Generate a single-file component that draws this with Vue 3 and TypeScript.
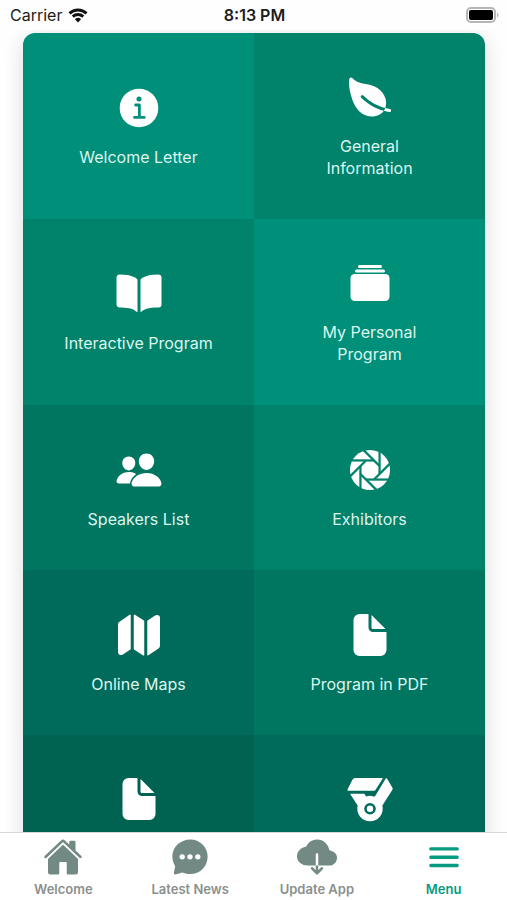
<script setup lang="ts">
import { ref } from 'vue'

interface Tile {
  icon: string
  label?: string
  name?: string
  tone: string
}

interface Tab {
  icon: string
  label: string
}

const tiles: Tile[] = [
  { icon: 'info', label: 'Welcome Letter', tone: 'tone-1' },
  { icon: 'leaf', label: 'General\nInformation', tone: 'tone-2' },
  { icon: 'book', label: 'Interactive Program', tone: 'tone-2' },
  { icon: 'albums', label: 'My Personal\nProgram', tone: 'tone-1' },
  { icon: 'people', label: 'Speakers List', tone: 'tone-3' },
  { icon: 'aperture', label: 'Exhibitors', tone: 'tone-2' },
  { icon: 'map', label: 'Online Maps', tone: 'tone-4' },
  { icon: 'document', label: 'Program in PDF', tone: 'tone-3' },
  { icon: 'document', name: 'Document', tone: 'tone-5' },
  { icon: 'medal', name: 'Awards', tone: 'tone-4' },
]

const tabs: Tab[] = [
  { icon: 'home', label: 'Welcome' },
  { icon: 'chat', label: 'Latest News' },
  { icon: 'cloud', label: 'Update App' },
  { icon: 'menu', label: 'Menu' },
]

const activeTab = ref('menu')

const glyphs: Record<string, string[]> = {
  leaf: [
    'M161.35 242a16 16 0 0122.62-.68c73.63 69.36 147.51 111.56 234.45 133.07 11.73-32 12.77-67.22 2.64-101.58-13.44-45.59-44.74-85.31-90.49-114.86-40.84-26.38-81.66-33.25-121.15-39.89-49.82-8.38-96.88-16.3-141.79-63.85-5-5.26-11.81-7.37-18.32-5.66-7.44 2-12.43 7.88-14.82 17.6-5.6 22.75-2 86.51 13.75 153.82 25.29 108.14 65.65 162.86 95.06 189.73 38 34.69 87.62 53.9 136.93 53.9a186 186 0 0027.77-2.04c41.71-6.32 76.43-27.27 96-57.75-89.49-23.28-165.94-67.55-242-139.16a16 16 0 01-.65-22.65z',
    'M467.43 384.19c-16.83-2.59-33.13-5.84-49-9.77a157.71 157.71 0 01-12.13 25.68c-.73 1.25-1.5 2.49-2.29 3.71a584.21 584.21 0 0058.56 12 16 16 0 104.87-31.62z',
  ],
  book: [
    'M202.24 74C166.11 56.75 115.61 48.3 48 48a31.36 31.36 0 00-17.92 5.33A32 32 0 0016 79.9V366c0 19.34 13.76 33.93 32 33.93 71.07 0 142.36 6.64 185.06 47a4.11 4.11 0 006.94-3V106.82a15.89 15.89 0 00-5.46-12A143 143 0 00202.24 74z',
    'M481.92 53.3A31.33 31.33 0 00464 48c-67.61.3-118.11 8.71-154.24 26a143.31 143.31 0 00-32.31 20.78 15.93 15.93 0 00-5.45 12v337.13a3.93 3.93 0 006.68 2.81c25.67-25.5 70.72-46.82 185.36-46.81a32 32 0 0032-32v-288a32 32 0 00-14.08-26.81z',
  ],
  albums: [
    'M368 96H144a16 16 0 010-32h224a16 16 0 010 32z',
    'M400 144H112a16 16 0 010-32h288a16 16 0 010 32z',
    'M419.13 448H92.87A44.92 44.92 0 0148 403.13V204.87A44.92 44.92 0 0192.87 160h326.26A44.92 44.92 0 01464 204.87v198.26A44.92 44.92 0 01419.13 448z',
  ],
  people: [
    'M336 256c-20.56 0-40.44-9.18-56-25.84-15.13-16.25-24.37-37.92-26-61-1.74-24.62 5.77-47.26 21.14-63.76S312 80 336 80c23.83 0 45.38 9.06 60.7 25.52 15.47 16.62 23 39.22 21.26 63.63-1.67 23.11-10.9 44.77-26 61C376.44 246.82 356.57 256 336 256z',
    'M467.83 432H204.18a27.71 27.71 0 01-22-10.67 30.22 30.22 0 01-5.26-25.79c8.42-33.81 29.28-61.85 60.32-81.08C264.79 297.4 299.86 288 336 288c36.85 0 71 9 98.71 26.05 31.11 19.13 52 47.33 60.38 81.55a30.27 30.27 0 01-5.32 25.78A27.68 27.68 0 01467.83 432z',
    'M147 260c-35.19 0-66.13-32.72-69-72.93-1.42-20.6 5-39.65 18-53.62 12.86-13.83 31-21.45 51-21.45s38 7.66 50.93 21.57c13.1 14.08 19.5 33.09 18 53.52C213.06 227.3 182.13 260 147 260z',
    'M212.66 291.45c-17.59-8.6-40.42-12.9-65.65-12.9-29.46 0-58.07 7.68-80.57 21.62C40.93 316 23.77 339.05 16.84 366.88a27.39 27.39 0 004.79 23.36A25.32 25.32 0 0041.72 400h111a8 8 0 007.87-6.57c.11-.63.25-1.26.41-1.88 8.48-34.06 28.35-62.84 57.71-83.82a8 8 0 00-.63-13.39c-1.57-.92-3.37-1.89-5.42-2.89z',
  ],
  map: [
    'M48.17 113.34A32 32 0 0032 141.24V438a32 32 0 0047 28.37c.43-.23.85-.47 1.26-.74l84.14-55.05a8 8 0 003.63-6.72V46.45a8 8 0 00-12.51-6.63z',
    'M212.36 39.31A8 8 0 00200 46v357.56a8 8 0 003.63 6.7l96.23 63.32A8 8 0 00312 467V108.67a8 8 0 00-3.64-6.73z',
    'M464.53 46.47a31.64 31.64 0 00-31.5-.88 12.07 12.07 0 00-1.25.74l-84.15 55a8 8 0 00-3.63 6.72v357.46a8 8 0 0012.52 6.63l107.07-73.46a32 32 0 0016.41-28V74.31a31.9 31.9 0 00-15.47-27.84z',
  ],
  document: [
    'M428 224H288a48 48 0 01-48-48V36a4 4 0 00-4-4h-92a64 64 0 00-64 64v320a64 64 0 0064 64h224a64 64 0 0064-64V228a4 4 0 00-4-4z',
    'M419.22 188.59L275.41 44.78a2 2 0 00-3.41 1.41V176a16 16 0 0016 16h129.81a2 2 0 001.41-3.41z',
  ],
  medal: [
    'M97 32H386a6 6 0 015 9L314 160a16 16 0 01-13 8H28a12 12 0 01-11-17L70 48a32 32 0 0127-16z',
    'M424 38a8 8 0 0113 0L494 132a24 24 0 011 25L388 325a136 136 0 11-264 0L43 200h152l19 29a136 136 0 0178-1h16z',
  ],
  home: [
    'M261.56 101.28a8 8 0 00-11.06 0L66.4 277.15a8 8 0 00-2.47 5.79L63.9 448a32 32 0 0032 32H192a16 16 0 0016-16V328a8 8 0 018-8h80a8 8 0 018 8v136a16 16 0 0016 16h96.06a32 32 0 0032-32V282.94a8 8 0 00-2.47-5.79z',
    'M490.91 244.15l-74.8-71.56V64a16 16 0 00-16-16h-48a16 16 0 00-16 16v32l-57.92-55.38C272.77 35.14 264.71 32 256 32c-8.68 0-16.72 3.14-22.14 8.63l-212.7 203.5c-6.22 6-7 15.87-1.34 22.37A16 16 0 0043 267.56L250.5 69.28a8 8 0 0111.06 0l207.52 198.28a16 16 0 0022.59-.44c6.14-6.36 5.63-16.86-.76-22.97z',
  ],
  chat: [
    'M260 32C144 32 30 118 30 247c0 41 11 82 31 118 3 6 4 12 3 18L49 462c-2 12 8 20 19 17l81-23c6-2 12-2 18 1 29 12 61 18 93 18 124 0 222-98 222-225C482 130 384 32 260 32z',
  ],
  cloud: [
    'M473.66 194c-14-10.38-31.2-18-49.36-22.11a16.11 16.11 0 01-12.19-12.22c-7.8-34.75-24.59-64.55-49.27-87.13C334.15 46.25 296.21 31.79 256 31.79c-35.35 0-68 11.08-94.37 32.05a150.07 150.07 0 00-42.06 53 16 16 0 01-11.31 8.87c-26.75 5.4-50.9 16.87-69.34 33.12C13.46 181.33 0 211.24 0 245.39c0 34.52 14.49 66 40.79 86.76C65.91 353.79 99.73 364 136 364h104V224a16 16 0 0132 0v140h140c66 0 100-50 100-100 0-32-14-54-38.34-70z',
    'M240 425.42l-36.7-36.64a16 16 0 00-22.6 22.65l64 63.89a16 16 0 0022.6 0l64-63.89a16 16 0 00-22.6-22.65L272 425.42V364h-32z',
  ],
}

const bladeAngles: number[] = [0, 45, 90, 135, 180, 225, 270, 315]
</script>

<template>
  <div class="screen">
    <header class="status">
      <div class="carrier">
        <span>Carrier</span>
        <svg class="wifi" viewBox="0 0 20 15" aria-hidden="true">
          <path d="M1.5 5.3a12.3 12.3 0 0117 0M4.8 8.6a7.6 7.6 0 0110.4 0" />
          <path class="wifi-dot" d="M10 14.5l-3.1-3.2a4.5 4.5 0 016.2 0z" />
        </svg>
      </div>
      <time class="clock">8:13 PM</time>
      <svg class="battery" viewBox="0 0 33 16" aria-hidden="true">
        <rect class="shell" x="1" y="1" width="28" height="14" rx="4" />
        <rect x="3" y="3" width="24" height="10" rx="2" />
        <path class="cap" d="M31 5.5c2 1 2 4 0 5z" />
      </svg>
    </header>

    <main class="content">
      <div class="grid">
        <a
          v-for="(tile, i) in tiles"
          :key="i"
          href="#"
          class="tile"
          :class="[tile.tone, { bare: !tile.label }]"
          :aria-label="tile.name"
          @click.prevent
        >
          <svg class="tile-icon" viewBox="0 0 512 512" aria-hidden="true">
            <template v-if="tile.icon === 'info'">
              <circle cx="256" cy="256" r="206" />
              <circle class="hole" cx="256" cy="160" r="27" />
              <path class="cut info-stroke" d="M220 224h40v128M208 356h104" />
            </template>
            <template v-else-if="tile.icon === 'aperture'">
              <circle cx="256" cy="256" r="214" />
              <path
                v-for="angle in bladeAngles"
                :key="angle"
                class="cut blade"
                d="M298 154H50"
                :transform="`rotate(${angle} 256 256)`"
              />
            </template>
            <template v-else>
              <path v-for="d in glyphs[tile.icon]" :key="d" :d="d" />
              <circle v-if="tile.icon === 'medal'" class="cut ring" cx="256" cy="360" r="48" />
            </template>
          </svg>
          <span v-if="tile.label" class="tile-label">{{ tile.label }}</span>
        </a>
      </div>
    </main>

    <nav class="tabs">
      <button
        v-for="tab in tabs"
        :key="tab.icon"
        type="button"
        class="tab"
        :class="{ active: activeTab === tab.icon }"
        @click="activeTab = tab.icon"
      >
        <svg class="tab-icon" viewBox="0 0 512 512" aria-hidden="true">
          <path v-if="tab.icon === 'menu'" class="bars" d="M88 152h336M88 258h336M88 364h336" />
          <path v-for="d in glyphs[tab.icon]" :key="d" :d="d" />
          <template v-if="tab.icon === 'chat'">
            <circle class="dot" cx="156" cy="254" r="34" />
            <circle class="dot" cx="256" cy="254" r="34" />
            <circle class="dot" cx="356" cy="254" r="34" />
          </template>
        </svg>
        <span>{{ tab.label }}</span>
      </button>
    </nav>
  </div>
</template>

<style>
body {
  margin: 0;
  background: #fff;
}
</style>

<style scoped>
.screen {
  display: flex;
  flex-direction: column;
  height: 100vh;
  overflow: hidden;
  background: #fefefe;
  font-family: Inter, 'Liberation Sans', sans-serif;
}

.status {
  display: grid;
  grid-template-columns: 1fr auto 1fr;
  align-items: center;
  flex: none;
  height: 30px;
  padding: 0 8px 0 10px;
  color: #1c1c1c;
  font-size: 16px;
  line-height: 20px;
}

.carrier {
  display: flex;
  align-items: center;
  gap: 6px;
}

.wifi {
  width: 20px;
  height: 15px;
  fill: none;
  stroke: #111;
  stroke-width: 3;
}

.wifi-dot {
  fill: #111;
  stroke: none;
}

.clock {
  font-weight: 600;
}

.battery {
  justify-self: end;
  width: 33px;
  height: 16px;
  fill: #000;
}

.shell {
  fill: #fff;
  stroke: #b5b5b5;
  stroke-width: 2;
}

.cap {
  fill: #b5b5b5;
}

.content {
  flex: 1;
  min-height: 0;
  overflow: hidden;
  padding: 3px 22px 0 23px;
}

.grid {
  display: grid;
  grid-template-columns: repeat(2, minmax(0, 1fr));
  overflow: hidden;
  border-radius: 12px;
  box-shadow: 0 4px 20px rgba(0, 0, 0, 0.14);
}

.tile {
  display: flex;
  flex-direction: column;
  align-items: center;
  justify-content: center;
  gap: 14px;
  box-sizing: border-box;
  min-height: 165px;
  padding: 40px 16px;
  background: var(--tone);
  color: #dcf5ef;
  font-size: 16px;
  line-height: 22px;
  text-align: center;
  text-decoration: none;
}

.tile-label {
  white-space: pre-line;
}

.bare {
  justify-content: flex-start;
}

.tone-1 {
  --tone: #008f79;
}

.tone-2 {
  --tone: #00826b;
}

.tone-3 {
  --tone: #007560;
}

.tone-4 {
  --tone: #006b5a;
}

.tone-5 {
  --tone: #006251;
}

.tile-icon {
  flex: none;
  width: 48px;
  height: 48px;
  fill: #fff;
}

.hole {
  fill: var(--tone);
}

.cut {
  fill: none;
  stroke: var(--tone);
}

.info-stroke {
  stroke-width: 30;
  stroke-linecap: round;
  stroke-linejoin: round;
}

.blade {
  stroke-width: 24;
}

.ring {
  stroke-width: 28;
}

.tabs {
  display: grid;
  grid-template-columns: repeat(4, 1fr);
  flex: none;
  border-top: 1px solid #d4d8d7;
  background: #fff;
}

.tab {
  display: flex;
  flex-direction: column;
  align-items: center;
  gap: 4px;
  padding: 4px 0 3px;
  border: 0;
  background: none;
  color: #738a84;
  font-family: inherit;
  font-size: 13px;
  font-weight: 600;
  line-height: 16px;
  cursor: pointer;
}

.tab span {
  color: #8a908e;
}

.tab.active,
.tab.active span {
  color: #089b82;
}

.tab-icon {
  width: 40px;
  height: 40px;
  fill: currentColor;
}

.bars {
  fill: none;
  stroke: currentColor;
  stroke-width: 44;
  stroke-linecap: round;
}

.dot {
  fill: #fff;
}
</style>
